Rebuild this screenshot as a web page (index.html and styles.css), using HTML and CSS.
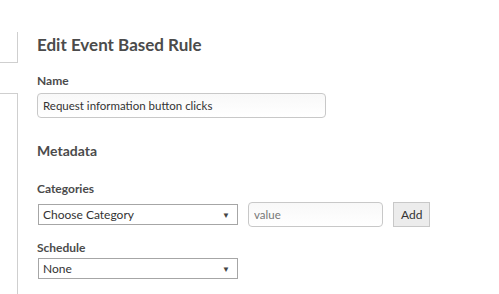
FILE: index.html
```html
<!doctype html>
<html lang="en">
  <head>
    <meta charset="UTF-8" />
    <meta name="viewport" content="width=device-width, initial-scale=1.0" />
    <title>Edit Event Based Rule</title>
    <link rel="stylesheet" href="styles.css">
  </head>
  <body>
    <div class="page">
      <aside class="rail">
        <div class="rail-box"></div>
        <div class="rail-panel"></div>
      </aside>

      <main class="editor">
        <h1 class="title">Edit Event Based Rule</h1>

        <label class="field">
          <span class="label">Name</span>
          <input class="text-input name-input" type="text" value="Request information button clicks" />
        </label>

        <h2 class="section">Metadata</h2>

        <div class="field">
          <span class="label label-row">Categories</span>
          <div class="row">
            <div class="select">
              <span class="select-value">Choose Category</span>
              <span class="arrow">&#9660;</span>
            </div>
            <input class="text-input value-input" type="text" placeholder="value" />
            <button class="btn" type="button">Add</button>
          </div>
        </div>

        <div class="field">
          <span class="label label-tight">Schedule</span>
          <div class="select">
            <span class="select-value">None</span>
            <span class="arrow">&#9660;</span>
          </div>
        </div>
      </main>
    </div>
  </body>
</html>
```

FILE: styles.css
```css
html,
body {
  margin: 0;
  height: 100%;
  background: #fff;
}

body {
  font-family: Lato, "Open Sans", sans-serif;
  color: #4b4b4b;
}

.page {
  display: flex;
  height: 100%;
}

.rail {
  display: flex;
  flex-direction: column;
  width: 18px;
  flex: none;
}

.rail-box {
  margin-top: 32px;
  height: 30px;
  border-right: 1px solid #cfcfcf;
  border-bottom: 1px solid #cfcfcf;
}

.rail-panel {
  margin-top: 30px;
  flex: 1;
  border-top: 1px solid #cfcfcf;
  border-right: 1px solid #cfcfcf;
}

.editor {
  padding: 34px 0 0 19px;
}

.title {
  margin: 0 0 17px;
  font-size: 17px;
  font-weight: 700;
  line-height: 22px;
}

.field {
  display: block;
  margin-bottom: 13px;
}

.label {
  display: block;
  margin-bottom: 4px;
  font-size: 12px;
  font-weight: 700;
  line-height: 16px;
}

.label-row {
  margin-bottom: 5px;
}

.label-tight {
  margin-bottom: 2px;
}

.text-input {
  box-sizing: border-box;
  height: 25px;
  padding: 0 5px;
  border: 1px solid #c8c8c8;
  border-radius: 4px;
  background: linear-gradient(#f8f8f8, #fff);
  font: 11.5px Lato, sans-serif;
  color: #333;
}

.text-input::placeholder {
  color: #777;
}

.name-input {
  width: 289px;
}

.section {
  margin: 24px 0 21px;
  font-size: 14px;
  font-weight: 700;
  line-height: 18px;
}

.row {
  display: flex;
  align-items: center;
  gap: 10px;
}

.select {
  box-sizing: border-box;
  display: flex;
  align-items: center;
  justify-content: space-between;
  width: 200px;
  height: 21px;
  margin-left: 1px;
  padding: 0 7px 0 4px;
  border: 1px solid #a6a6a6;
  font-size: 12px;
  color: #333;
}

.arrow {
  font-size: 8px;
  color: #444;
}

.value-input {
  width: 135px;
}

.btn {
  height: 25px;
  padding: 0 7px;
  border: 1px solid #c8c8c8;
  background: #ececec;
  font: 12px Lato, sans-serif;
  color: #333;
}
```
